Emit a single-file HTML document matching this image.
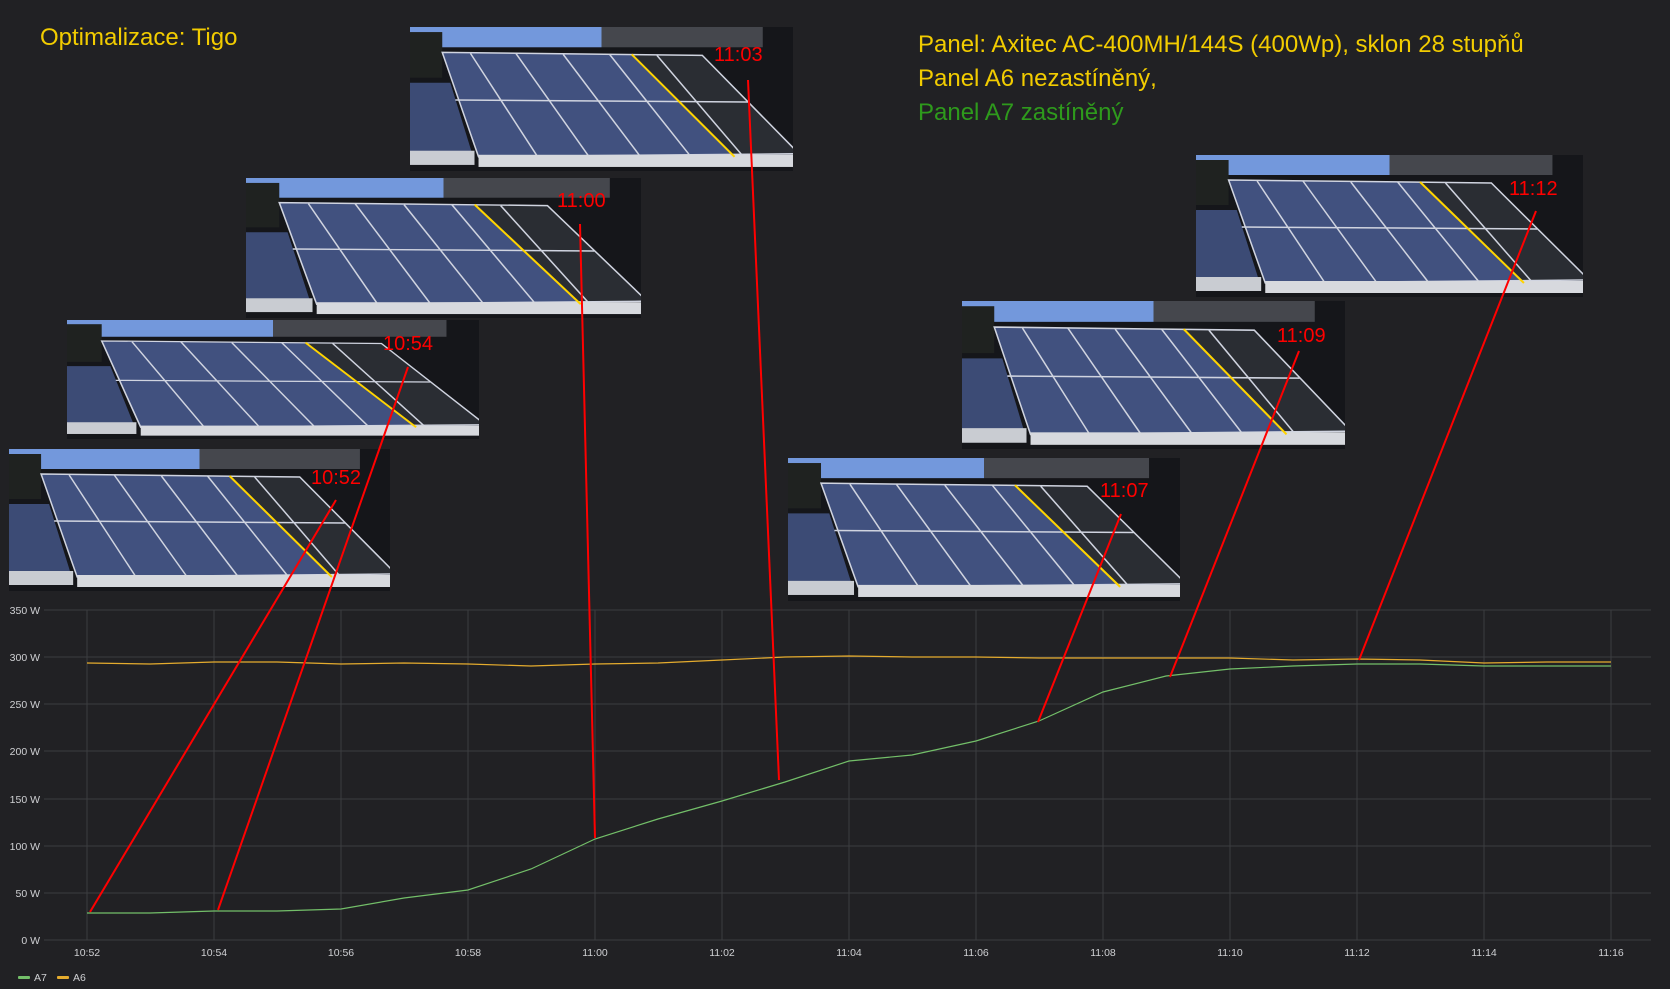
<!DOCTYPE html>
<html><head><meta charset="utf-8"><style>
body{margin:0;background:#212124;width:1670px;height:989px;overflow:hidden;position:relative;font-family:"Liberation Sans",sans-serif}
.ph{position:absolute}
.t{position:absolute;font-family:"Liberation Sans","DejaVu Sans",sans-serif;white-space:nowrap}
</style></head><body>
<svg width="0" height="0" style="position:absolute">
<defs>
<symbol id="pan" viewBox="0 0 380 142" preserveAspectRatio="none">
<rect width="380" height="142" fill="#15161a"/>
<rect x="0" y="0" width="190" height="20" fill="#7398dc"/>
<rect x="190" y="0" width="160" height="20" fill="#45474d"/>
<rect x="0" y="5" width="32" height="45" fill="#1f2220"/>
<polygon points="32,25 290,28 386,125 68,128" fill="#41517f"/>
<polygon points="220,27 290,28 386,125 322,128" fill="#2a2d33"/>
<polygon points="0,55 40,55 62,126 0,126" fill="#3c4b75"/>
<g stroke="#d0d4e0" stroke-width="1.5" fill="none">
<polygon points="32,25 290,28 386,125 68,128"/>
<line x1="60" y1="26" x2="126" y2="127"/><line x1="105" y1="26" x2="177" y2="127"/><line x1="152" y1="27" x2="228" y2="127"/><line x1="198" y1="27" x2="278" y2="127"/><line x1="245" y1="28" x2="330" y2="127"/>
<line x1="45" y1="72" x2="335" y2="74"/>
</g>
<rect x="0" y="122" width="64" height="14" fill="#c9ccd2"/>
<rect x="68" y="126" width="322" height="12" fill="#d7d9de"/>
<line x1="220" y1="27" x2="322" y2="128" stroke="#ffd400" stroke-width="2"/>
</symbol>
</defs></svg>

<svg class="ph" style="left:9px;top:449px" width="381" height="142"><use href="#pan" width="381" height="142"/></svg>
<svg class="ph" style="left:67px;top:320px" width="412" height="119"><use href="#pan" width="412" height="119"/></svg>
<svg class="ph" style="left:246px;top:178px" width="395" height="140"><use href="#pan" width="395" height="140"/></svg>
<svg class="ph" style="left:410px;top:27px" width="383" height="144"><use href="#pan" width="383" height="144"/></svg>
<svg class="ph" style="left:788px;top:458px" width="392" height="143"><use href="#pan" width="392" height="143"/></svg>
<svg class="ph" style="left:962px;top:301px" width="383" height="148"><use href="#pan" width="383" height="148"/></svg>
<svg class="ph" style="left:1196px;top:155px" width="387" height="142"><use href="#pan" width="387" height="142"/></svg>

<div class="t" style="left:311px;top:467px;color:#f00;font-size:20px">10:52</div>
<div class="t" style="left:383px;top:333px;color:#f00;font-size:20px">10:54</div>
<div class="t" style="left:557px;top:190px;color:#f00;font-size:20px">11:00</div>
<div class="t" style="left:714px;top:44px;color:#f00;font-size:20px">11:03</div>
<div class="t" style="left:1100px;top:480px;color:#f00;font-size:20px">11:07</div>
<div class="t" style="left:1277px;top:325px;color:#f00;font-size:20px">11:09</div>
<div class="t" style="left:1509px;top:178px;color:#f00;font-size:20px">11:12</div>

<div class="t" style="left:40px;top:24px;color:#f2cc00;font-size:24px">Optimalizace: Tigo</div>
<div class="t" style="left:918px;top:31px;color:#f2cc00;font-size:24px">Panel: Axitec AC-400MH/144S (400Wp), sklon 28 stupňů</div>
<div class="t" style="left:918px;top:65px;color:#f2cc00;font-size:24px">Panel A6 nezastíněný,</div>
<div class="t" style="left:918px;top:99px;color:#2e9a1c;font-size:24px">Panel A7 zastíněný</div>

<svg class="ph" style="left:0;top:0" width="1670" height="989">
<g stroke="#3c3d40" stroke-width="1">
<line x1="44" y1="610" x2="1651" y2="610"/><line x1="44" y1="657" x2="1651" y2="657"/><line x1="44" y1="704" x2="1651" y2="704"/><line x1="44" y1="751" x2="1651" y2="751"/><line x1="44" y1="799" x2="1651" y2="799"/><line x1="44" y1="846" x2="1651" y2="846"/><line x1="44" y1="893" x2="1651" y2="893"/><line x1="44" y1="940" x2="1651" y2="940"/>
<line x1="87" y1="610" x2="87" y2="940"/><line x1="214" y1="610" x2="214" y2="940"/><line x1="341" y1="610" x2="341" y2="940"/><line x1="468" y1="610" x2="468" y2="940"/><line x1="595" y1="610" x2="595" y2="940"/><line x1="722" y1="610" x2="722" y2="940"/><line x1="849" y1="610" x2="849" y2="940"/><line x1="976" y1="610" x2="976" y2="940"/><line x1="1103" y1="610" x2="1103" y2="940"/><line x1="1230" y1="610" x2="1230" y2="940"/><line x1="1357" y1="610" x2="1357" y2="940"/><line x1="1484" y1="610" x2="1484" y2="940"/><line x1="1611" y1="610" x2="1611" y2="940"/>
</g>
<g font-family="Liberation Sans, sans-serif" font-size="10.5" fill="#cfd0d3" text-anchor="end">
<text x="40" y="614">350 W</text><text x="40" y="661">300 W</text><text x="40" y="708">250 W</text><text x="40" y="755">200 W</text><text x="40" y="803">150 W</text><text x="40" y="850">100 W</text><text x="40" y="897">50 W</text><text x="40" y="944">0 W</text>
</g>
<g font-family="Liberation Sans, sans-serif" font-size="10.5" fill="#cfd0d3" text-anchor="middle">
<text x="87" y="956">10:52</text><text x="214" y="956">10:54</text><text x="341" y="956">10:56</text><text x="468" y="956">10:58</text><text x="595" y="956">11:00</text><text x="722" y="956">11:02</text><text x="849" y="956">11:04</text><text x="976" y="956">11:06</text><text x="1103" y="956">11:08</text><text x="1230" y="956">11:10</text><text x="1357" y="956">11:12</text><text x="1484" y="956">11:14</text><text x="1611" y="956">11:16</text>
</g>
<polyline fill="none" stroke="#e5ac2e" stroke-width="1.2" points="87,663 150,664 214,662 277,662 341,664 404,663 468,664 531,666 595,664 658,663 722,660 785,657 849,656 912,657 976,657 1039,658 1103,658 1166,658 1230,658 1293,660 1357,659 1420,660 1484,663 1547,662 1611,662"/>
<polyline fill="none" stroke="#73bf69" stroke-width="1.2" points="87,913 150,913 214,911 277,911 341,909 404,898 468,890 531,869 595,839 658,819 722,801 785,782 849,761 912,755 976,741 1039,721 1103,692 1166,676 1230,669 1293,666 1357,664 1420,664 1484,666 1547,666 1611,666"/>
<g stroke="#f00" stroke-width="2">
<line x1="336" y1="500" x2="90" y2="912"/>
<line x1="408" y1="367" x2="218" y2="910"/>
<line x1="580" y1="224" x2="595" y2="838"/>
<line x1="748" y1="80" x2="779" y2="780"/>
<line x1="1121" y1="514" x2="1038" y2="722"/>
<line x1="1299" y1="351" x2="1170" y2="677"/>
<line x1="1536" y1="211" x2="1359" y2="660"/>
</g>
<rect x="18" y="976" width="12" height="3" rx="1" fill="#73bf69"/>
<text x="34" y="981" font-family="Liberation Sans, sans-serif" font-size="10.5" fill="#cfd0d3">A7</text>
<rect x="57" y="976" width="12" height="3" rx="1" fill="#e5ac2e"/>
<text x="73" y="981" font-family="Liberation Sans, sans-serif" font-size="10.5" fill="#cfd0d3">A6</text>
</svg>
</body></html>
